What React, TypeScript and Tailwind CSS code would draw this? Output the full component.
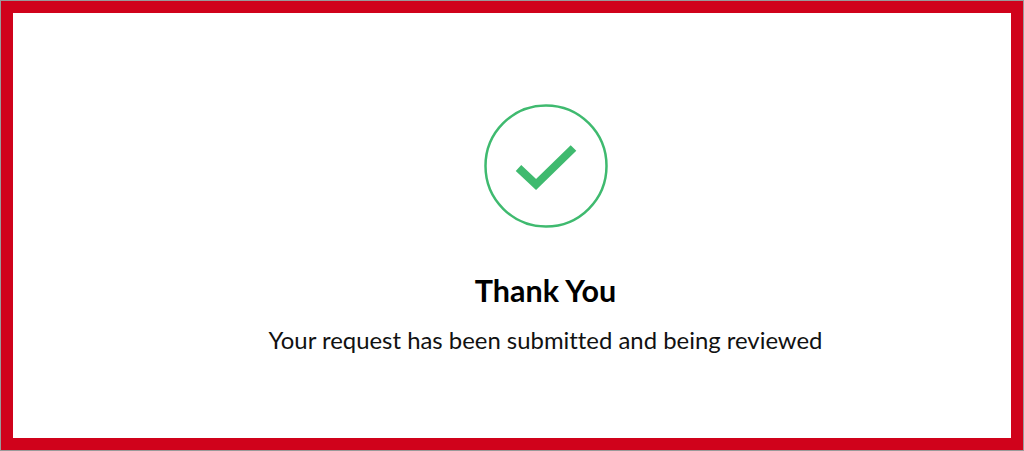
export default function App() {
  return (
    <div className="h-[451px] w-[1024px] overflow-hidden border border-[#9a9a9a] bg-white font-['Lato',sans-serif]">
      <div className="flex h-full flex-col items-center border-[12px] border-[#d0021b] pl-[67px] pt-[91px]">
        <svg width="124" height="124" viewBox="0 0 124 124" fill="none">
          <circle cx="62" cy="62" r="60.5" stroke="#3fba6f" strokeWidth="2.5" />
          <path d="M34.5 64 L52 80.5 L89.5 44" stroke="#3fba6f" strokeWidth="8" />
        </svg>
        <h1 className="mt-[40px] text-[30.5px] leading-[44px] font-bold text-black">Thank You</h1>
        <p className="mt-[10px] text-[23.9px] leading-[36px] text-[#111] [font-variant-ligatures:none]">Your request has been submitted and being reviewed</p>
      </div>
    </div>
  );
}
